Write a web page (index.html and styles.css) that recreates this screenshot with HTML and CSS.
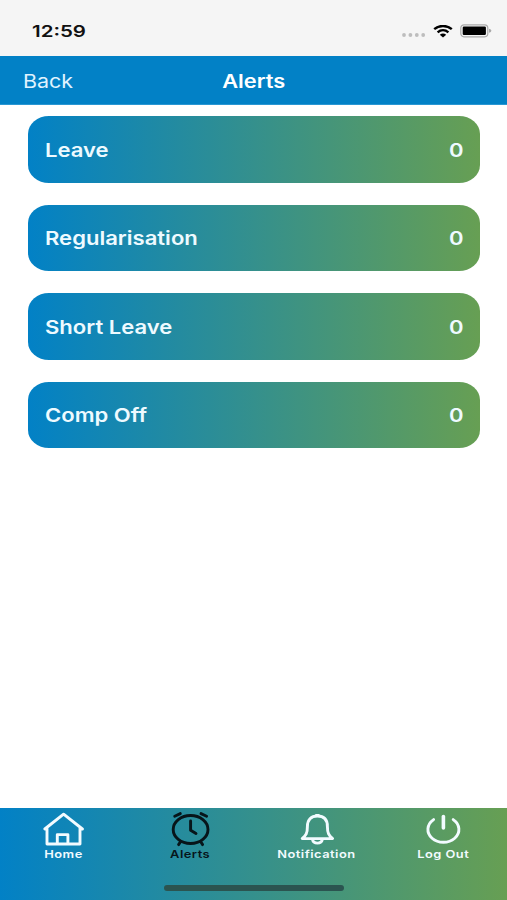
FILE: index.html
```html
<!DOCTYPE html>
<html lang="en">
<head>
  <meta charset="UTF-8">
  <meta name="viewport" content="width=device-width, initial-scale=1.0">
  <title>Alerts</title>
  <link rel="stylesheet" href="styles.css">
</head>
<body>
  <div class="screen">
    <div class="status-bar">
      <span class="time">12:59</span>
      <div class="status-icons">
        <svg class="signal" width="24" height="4" viewBox="0 0 24 4">
          <circle cx="2" cy="2" r="1.9"/><circle cx="8.4" cy="2" r="1.9"/><circle cx="14.8" cy="2" r="1.9"/><circle cx="21.2" cy="2" r="1.9"/>
        </svg>
        <svg class="wifi" width="20" height="13" viewBox="0 0 20 13">
          <path d="M1.2 4.2C6-.1 14-.1 18.8 4.2"/>
          <path d="M4.6 7.3C7.8 4.6 12.2 4.6 15.4 7.3"/>
          <path class="dot" d="M6.8 9.7Q10 7.2 13.2 9.7L10 12.6Z"/>
        </svg>
        <svg class="battery" width="32" height="14" viewBox="0 0 32 14">
          <rect class="case" x=".8" y=".8" width="27" height="12" rx="3.2"/>
          <rect x="2.7" y="2.6" width="23.2" height="8.4" rx="1.2"/>
          <path class="tip" d="M29 4.8Q31.4 5.4 31.4 6.8T29 8.8Z"/>
        </svg>
      </div>
    </div>

    <header class="nav-bar">
      <a class="back"><span>Back</span></a>
      <h1>Alerts</h1>
    </header>

    <main class="alert-list">
      <div class="alert-card"><span class="name">Leave</span><span class="count">0</span></div>
      <div class="alert-card"><span class="name">Regularisation</span><span class="count">0</span></div>
      <div class="alert-card"><span class="name">Short Leave</span><span class="count">0</span></div>
      <div class="alert-card"><span class="name">Comp Off</span><span class="count">0</span></div>
    </main>

    <footer class="tab-bar">
      <nav class="tabs">
        <a class="tab">
          <svg width="42" height="36" viewBox="0 0 42 36">
            <path d="M5 18H2.8L21.6 3.2 40.4 18H38M5 17V33H38V17M15.3 33V23.6H25.9V33"/>
          </svg>
          <span>Home</span>
        </a>
        <a class="tab active">
          <svg width="42" height="36" viewBox="0 0 42 36">
            <ellipse cx="21.6" cy="18.5" rx="17.4" ry="14"/>
            <path d="M21.6 10V19.3L27 22.6M5.7 5.2 11.3 2.6M37.6 5.2 32 2.6M11.3 31 9.6 33.6M31.9 31 33.6 33.6"/>
          </svg>
          <span>Alerts</span>
        </a>
        <a class="tab">
          <svg width="42" height="36" viewBox="0 0 42 36">
            <path d="M6.2 27.6C10 24.2 11.4 22.4 11.4 15.4 11.4 8.8 15 5 21.4 5S31.4 8.8 31.4 15.4C31.4 22.4 32.8 24.2 36.6 27.6ZM20.2 4.4H22.6M16.4 28.2C17.4 33.4 25.4 33.4 26.4 28.2"/>
          </svg>
          <span>Notification</span>
        </a>
        <a class="tab">
          <svg width="42" height="36" viewBox="0 0 42 36">
            <path d="M10.6 8.6A15.5 12.8 0 1 0 30.2 8.6"/>
            <path class="bar" d="M20.4 5.6V17"/>
          </svg>
          <span>Log Out</span>
        </a>
      </nav>
      <div class="home-indicator"></div>
    </footer>
  </div>
</body>
</html>
```

FILE: styles.css
```css
body {
  margin: 0;
  font-family: Inter, "Liberation Sans", sans-serif;
  background-color: #fff;
}
.screen {
  height: 900px;
  display: flex;
  flex-direction: column;
}

/* status bar */
.status-bar {
  height: 56px;
  box-sizing: border-box;
  padding: 6px 15px 0 32px;
  display: flex;
  align-items: center;
  justify-content: space-between;
  background-color: #f5f5f5;
}
.time {
  font-size: 16px;
  font-weight: 600;
  color: #111;
  transform: scaleX(1.28);
  transform-origin: left;
}
.status-icons { display: flex; align-items: center; }
.signal { fill: #bdbdbd; margin: 8px 7px 0 0; }
.wifi { fill: none; stroke: #000; stroke-width: 2.4; margin-right: 7px; }
.wifi .dot { fill: #000; stroke: none; }
.battery .case { fill: none; stroke: #aaa; stroke-width: 1.2; }
.battery .tip { fill: #aaa; }

/* navigation bar */
.nav-bar {
  height: 49px;
  box-sizing: border-box;
  padding: 2px 23px 0;
  display: grid;
  grid-template-columns: 1fr auto 1fr;
  align-items: center;
  background-color: #0281c6;
  border-bottom: 1px solid #2a97d3;
  color: #fff;
}
.back { font-size: 19px; color: #e0f3ff; }
.back span {
  display: inline-block;
  transform: scaleX(1.13);
  transform-origin: left;
}
.nav-bar h1 {
  margin: 0;
  font-size: 18.5px;
  font-weight: 600;
  transform: scaleX(1.18);
}

/* alert cards */
.alert-list {
  flex: 1;
  padding: 11px 27px 0 28px;
  display: flex;
  flex-direction: column;
  gap: 22px;
}
.alert-card {
  height: 66.5px;
  box-sizing: border-box;
  padding: 2px 16px 0 16.5px;
  display: flex;
  align-items: center;
  justify-content: space-between;
  border-radius: 21px / 18px;
  background: linear-gradient(to right, #0281c6, #679f53);
  color: #eefaff;
  font-size: 19px;
  font-weight: 600;
}
.name { transform: scaleX(1.16); transform-origin: left; }
.count { transform: scaleX(1.16); transform-origin: right; }

/* bottom tabs */
.tab-bar {
  height: 92px;
  box-sizing: border-box;
  padding-top: 3px;
  display: flex;
  flex-direction: column;
  align-items: center;
  background: linear-gradient(to right, #0281c6, #679f53);
}
.tabs {
  width: 100%;
  display: grid;
  grid-template-columns: repeat(4, 1fr);
}
.tab {
  display: flex;
  flex-direction: column;
  align-items: center;
  color: #f2fbff;
  font-size: 11px;
  line-height: 15px;
  font-weight: 600;
}
.tab span {
  letter-spacing: 0.4px;
  transform: scaleX(1.17);
}
.tab svg {
  fill: none;
  stroke: currentColor;
  stroke-width: 2.9;
  stroke-linecap: round;
  stroke-linejoin: round;
}
.tab .bar { stroke-width: 3.6; }
.tab.active { color: #07151a; }
.home-indicator {
  width: 180px;
  height: 6px;
  margin-top: 23px;
  border-radius: 3px;
  background-color: #2b5450;
}
```
